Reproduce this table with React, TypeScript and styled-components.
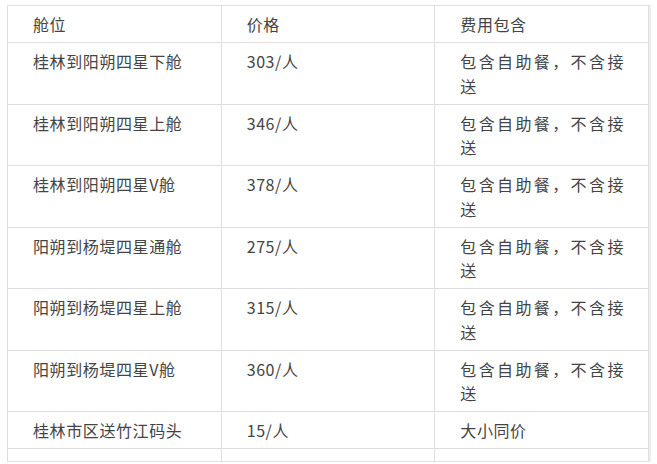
import * as React from 'react';
import styled, { createGlobalStyle } from 'styled-components';

type Row = { cabin: string; price: string; note: string };

const rows: Row[] = [
  { cabin: '桂林到阳朔四星下舱', price: '303/人', note: '包含自助餐，不含接送' },
  { cabin: '桂林到阳朔四星上舱', price: '346/人', note: '包含自助餐，不含接送' },
  { cabin: '桂林到阳朔四星V舱', price: '378/人', note: '包含自助餐，不含接送' },
  { cabin: '阳朔到杨堤四星通舱', price: '275/人', note: '包含自助餐，不含接送' },
  { cabin: '阳朔到杨堤四星上舱', price: '315/人', note: '包含自助餐，不含接送' },
  { cabin: '阳朔到杨堤四星V舱', price: '360/人', note: '包含自助餐，不含接送' },
  { cabin: '桂林市区送竹江码头', price: '15/人', note: '大小同价' },
];

const App = () => (
  <Page>
    <GlobalStyle />
    <PriceTable>
      <thead>
        <tr>
          <Cell as="th">舱位</Cell>
          <Cell as="th">价格</Cell>
          <Cell as="th">费用包含</Cell>
        </tr>
      </thead>
      <tbody>
        {rows.map(r => (
          <tr key={r.cabin}>
            <Cell>{r.cabin}</Cell>
            <Cell>{r.price}</Cell>
            <Cell>{r.note}</Cell>
          </tr>
        ))}
        <tr>
          <EmptyCell />
          <EmptyCell />
          <EmptyCell />
        </tr>
      </tbody>
    </PriceTable>
  </Page>
);

// STYLED COMPONENTS

const GlobalStyle = createGlobalStyle`
  html, body {
    margin: 0;
    padding: 0;
    background: #fff;
  }
`;

const Page = styled.div`
  padding: 5px 8px 0 7px;
  font-family: "Noto Sans CJK SC", "Liberation Sans", sans-serif;
  color: #444;
`;

const PriceTable = styled.table`
  width: 642px;
  border-collapse: collapse;
  table-layout: fixed;
  border: 1px solid #dedede;
  box-shadow: 2px 0 0 #efefef;
`;

const Cell = styled.td`
  width: 33.33%;
  padding: 6px 24px 5.5px 25px;
  border: 1px solid #dedede;
  font-size: 16px;
  font-weight: 400;
  line-height: 24.5px;
  letter-spacing: 0.6px;
  text-align: justify;
  vertical-align: top;
`;

const EmptyCell = styled.td`
  height: 12px;
  padding: 0;
  border: 1px solid #dedede;
`;

export default App;
